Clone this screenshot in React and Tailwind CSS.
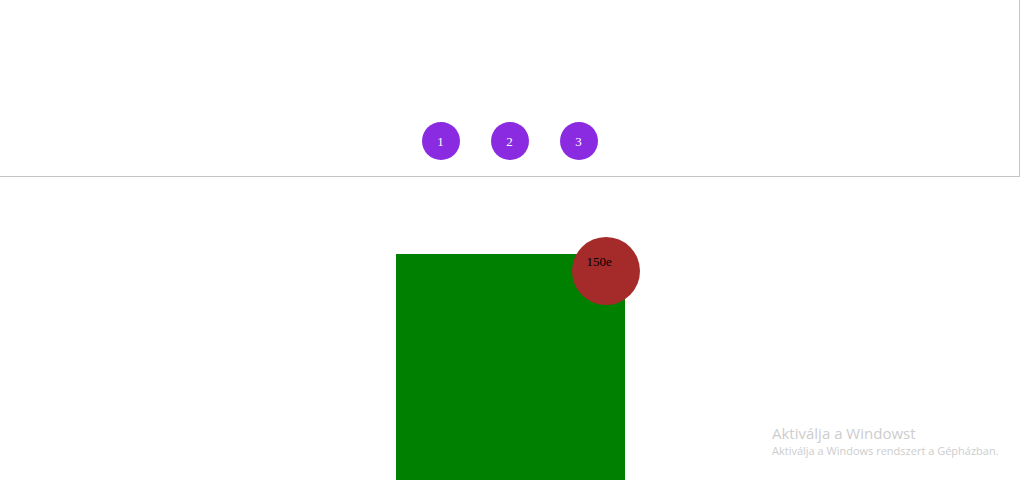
export default function App() {
  return (
    <div className="relative h-[480px] w-[1024px] overflow-hidden bg-white font-['Liberation_Serif',serif]">
      {/* Top panel */}
      <div className="flex h-[177px] w-[1020px] items-end justify-center gap-[31px] border-b border-r border-[#c4c4c4] pb-[16px]">
        {[1, 2, 3].map((n) => (
          <div
            key={n}
            className="flex h-[38px] w-[38px] items-center justify-center rounded-full bg-[#8a2be2] pt-[2px] text-[13px] text-white"
          >
            {n}
          </div>
        ))}
      </div>

      {/* Green block with badge */}
      <div className="flex w-[1020px] justify-center pt-[77px]">
        <div className="relative h-[300px] w-[229px] bg-[#008000]">
          <div className="absolute left-[176px] top-[-17px] h-[68px] w-[68px] rounded-full bg-[#a52a2a] pl-[15px] pt-[18px] text-[13px] leading-none text-black">
            150e
          </div>
        </div>
      </div>

      {/* Windows watermark */}
      <div className="absolute left-[772px] top-[423px] font-['Open_Sans',sans-serif] text-[#cdcdcd]">
        <div className="text-[15px] leading-[20px]">Aktiválja a Windowst</div>
        <div className="text-[11px] leading-[16px]">Aktiválja a Windows rendszert a Gépházban.</div>
      </div>
    </div>
  )
}
